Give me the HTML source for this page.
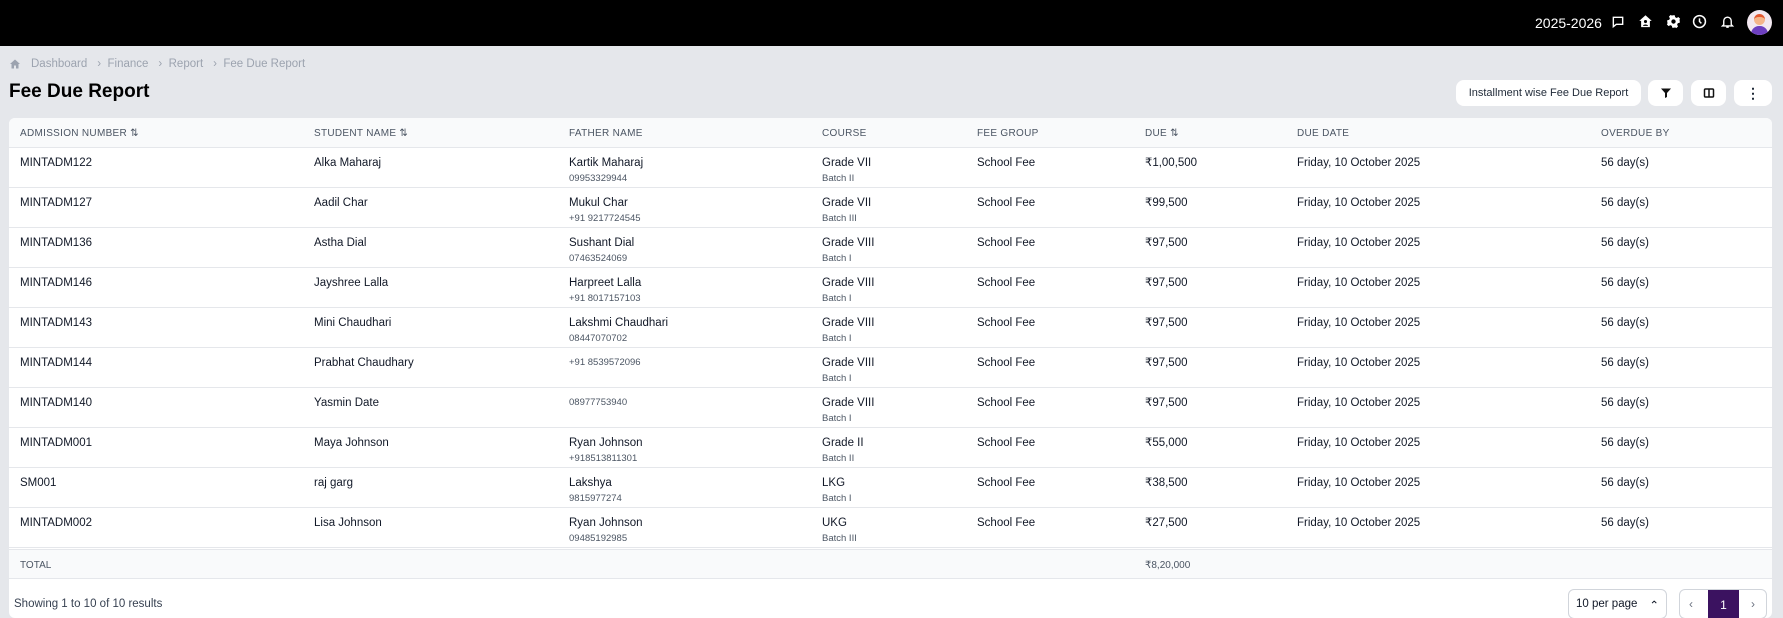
<!DOCTYPE html>
<html><head><meta charset="utf-8"><style>
*{box-sizing:border-box;margin:0;padding:0}
body{width:1783px;height:607px;overflow:hidden;background:#e5e7eb;font-family:"Liberation Sans",sans-serif;color:#111827;position:relative}
.top{position:absolute;left:0;top:0;width:1783px;height:46px;background:#000;color:#fff}
.abs{position:absolute}
.bc{top:58px;left:9px;font-size:11.5px;color:#9ca3af;display:flex;align-items:center}
.bc span{margin-right:10px}
h1{position:absolute;left:9px;top:81px;font-size:19px;font-weight:bold;color:#000}
.btn{position:absolute;top:80px;height:26px;background:#fff;border-radius:8px;font-size:11px;display:flex;align-items:center;justify-content:center;color:#1f2937}
.card{position:absolute;left:9px;top:118px;width:1763px;height:500px;background:#fff;border-radius:6px;overflow:hidden}
.row{position:absolute;left:0;width:1763px;border-bottom:1px solid #e5e7eb}
.c{position:absolute;font-size:11.5px;line-height:14px;color:#111827}
.s{font-size:9.5px;line-height:11px;color:#4b5563;margin-top:3px}
.hd .c{font-size:10px;color:#4b5563;letter-spacing:.3px}
</style></head><body>
<div class="top">
<div class="abs" style="left:1535px;top:15px;font-size:14px">2025-2026</div>
<svg class="abs" style="left:1611px;top:15px" width="14" height="14" viewBox="0 0 24 24" fill="none" stroke="#fff" stroke-width="2.4"><path d="M4 4h16v12H9l-5 4z"/></svg>
<svg class="abs" style="left:1638px;top:14px" width="15" height="15" viewBox="0 0 24 24" fill="#fff"><path d="M12 2 2 11h3v10h14V11h3z"/><circle cx="12" cy="12" r="2.5" fill="#000"/><path d="M8 19c0-3 8-3 8 0z" fill="#000"/></svg>
<svg class="abs" style="left:1666px;top:14px" width="15" height="15" viewBox="0 0 24 24" fill="#fff"><path d="M10 2h4l.6 3 2.5 1.3 2.7-1.6 2.8 2.8-1.6 2.7L22 10v4l-3 .6-1.3 2.5 1.6 2.7-2.8 2.8-2.7-1.6L14 22h-4l-.6-3-2.5-1.3-2.7 1.6-2.8-2.8 1.6-2.7L2 14v-4l3-.6 1.3-2.5L4.7 4.2l2.8-2.8 2.7 1.6z"/><circle cx="12" cy="12" r="3.5" fill="#000"/></svg>
<svg class="abs" style="left:1692px;top:14px" width="15" height="15" viewBox="0 0 24 24" fill="none" stroke="#fff" stroke-width="2.4"><circle cx="12" cy="12" r="9.5"/><path d="M12 7v5l3 3"/></svg>
<svg class="abs" style="left:1720px;top:14px" width="15" height="15" viewBox="0 0 24 24" fill="none" stroke="#fff" stroke-width="2.2"><path d="M6 17V11a6 6 0 0 1 12 0v6l2 2H4z M10 21h4"/></svg>
<div class="abs" style="left:1747px;top:10px;width:25px;height:25px;border-radius:50%;background:#f3e8f0;overflow:hidden">
<div class="abs" style="left:7px;top:4px;width:11px;height:11px;border-radius:50%;background:#f5b58a;border-top:3px solid #e4572e"></div>
<div class="abs" style="left:4px;top:16px;width:17px;height:12px;border-radius:8px 8px 0 0;background:#6d3fc0"></div></div>
</div>
<div class="abs bc"><svg width="12" height="12" viewBox="0 0 24 24" fill="#9ca3af" style="margin-right:10px"><path d="M12 3 2 12h3v9h5v-6h4v6h5v-9h3z"/></svg><span>Dashboard</span><span>›&nbsp; Finance</span><span>›&nbsp; Report</span><span>›&nbsp; Fee Due Report</span></div>
<h1>Fee Due Report</h1>
<div class="btn" style="left:1456px;width:185px">Installment wise Fee Due Report</div>
<div class="btn" style="left:1648px;width:35px"><svg width="12" height="12" viewBox="0 0 24 24" fill="#111"><path d="M2 3h20l-8 9v8l-4 2V12z"/></svg></div>
<div class="btn" style="left:1691px;width:35px"><svg width="12" height="12" viewBox="0 0 24 24" fill="none" stroke="#111" stroke-width="3"><rect x="3" y="4" width="18" height="16" rx="2"/><path d="M12 4v16"/></svg></div>
<div class="btn" style="left:1734px;width:38px;font-weight:bold;font-size:14px;line-height:1">⋮</div>
<div class="card">
<div class="row hd" style="top:0;height:30px;background:#f9fafb">
<div class="c" style="left:11px;top:9px">ADMISSION NUMBER ⇅</div><div class="c" style="left:305px;top:9px">STUDENT NAME ⇅</div><div class="c" style="left:560px;top:9px">FATHER NAME</div><div class="c" style="left:813px;top:9px">COURSE</div><div class="c" style="left:968px;top:9px">FEE GROUP</div><div class="c" style="left:1136px;top:9px">DUE ⇅</div><div class="c" style="left:1288px;top:9px">DUE DATE</div><div class="c" style="left:1592px;top:9px">OVERDUE BY</div>
</div>
<div id="rows"></div>
<div class="row" style="top:431px;height:30px;background:#f9fafb;border-top:1px solid #e5e7eb">
<div class="c" style="left:11px;top:9px;font-size:10px;color:#4b5563">TOTAL</div><div class="c" style="left:1136px;top:9px;font-size:10px;color:#4b5563">₹8,20,000</div></div>
<div class="c" style="left:5px;top:479px;font-size:11.5px;color:#374151">Showing 1 to 10 of 10 results</div>
<div class="abs" style="left:1559px;top:471px;width:99px;height:30px;border:1px solid #d1d5db;border-radius:6px;font-size:11.5px;padding:8px 7px">10 per page <span style="float:right">⌃</span></div>
<div class="abs" style="left:1670px;top:471px;width:88px;height:30px;border:1px solid #d1d5db;border-radius:6px;overflow:hidden;font-size:12px">
<span class="abs" style="left:9px;top:7px;color:#6b7280">‹</span>
<div class="abs" style="left:28px;top:0;width:31px;height:30px;background:#3b1260;color:#fff;text-align:center;padding-top:8px">1</div>
<span class="abs" style="left:71px;top:7px;color:#6b7280">›</span></div>
</div>
<script>
var d=[["MINTADM122","Alka Maharaj","Kartik Maharaj","09953329944","Grade VII","Batch II","₹1,00,500"],
["MINTADM127","Aadil Char","Mukul Char","+91 9217724545","Grade VII","Batch III","₹99,500"],
["MINTADM136","Astha Dial","Sushant Dial","07463524069","Grade VIII","Batch I","₹97,500"],
["MINTADM146","Jayshree Lalla","Harpreet Lalla","+91 8017157103","Grade VIII","Batch I","₹97,500"],
["MINTADM143","Mini Chaudhari","Lakshmi Chaudhari","08447070702","Grade VIII","Batch I","₹97,500"],
["MINTADM144","Prabhat Chaudhary","","+91 8539572096","Grade VIII","Batch I","₹97,500"],
["MINTADM140","Yasmin Date","","08977753940","Grade VIII","Batch I","₹97,500"],
["MINTADM001","Maya Johnson","Ryan Johnson","+918513811301","Grade II","Batch II","₹55,000"],
["SM001","raj garg","Lakshya","9815977274","LKG","Batch I","₹38,500"],
["MINTADM002","Lisa Johnson","Ryan Johnson","09485192985","UKG","Batch III","₹27,500"]];
var h="";d.forEach(function(r,i){var t=30+i*40;
h+='<div class="row" style="top:'+t+'px;height:40px">'+
'<div class="c" style="left:11px;top:8px">'+r[0]+'</div><div class="c" style="left:305px;top:8px">'+r[1]+'</div>'+
'<div class="c" style="left:560px;top:8px">'+(r[2]?r[2]+'<div class="s">'+r[3]+'</div>':'<div class="s" style="margin-top:1px">'+r[3]+'</div>')+'</div>'+
'<div class="c" style="left:813px;top:8px">'+r[4]+'<div class="s">'+r[5]+'</div></div>'+
'<div class="c" style="left:968px;top:8px">School Fee</div><div class="c" style="left:1136px;top:8px">'+r[6]+'</div>'+
'<div class="c" style="left:1288px;top:8px">Friday, 10 October 2025</div><div class="c" style="left:1592px;top:8px">56 day(s)</div></div>';});
document.getElementById("rows").innerHTML=h;
</script>
</body></html>
